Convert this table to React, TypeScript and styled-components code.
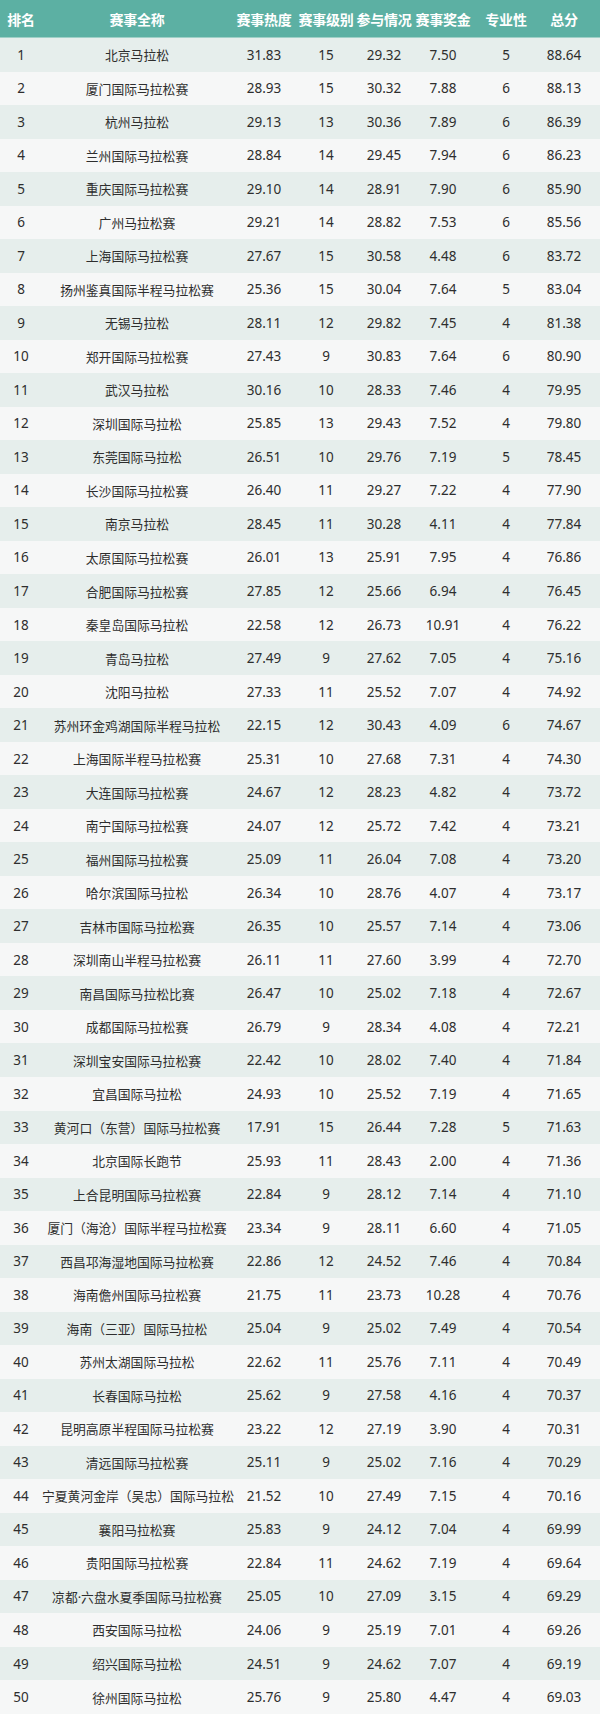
import styled, { createGlobalStyle } from "styled-components";

const GlobalStyle = createGlobalStyle`
  html, body {
    margin: 0;
    padding: 0;
    background: #ffffff;
  }
  body {
    font-family: "Noto Sans", "Noto Sans CJK SC", sans-serif;
  }
`;

type Race = [number, string, string, number, string, string, number, string];

const races: Race[] = [
  [1, "北京马拉松", "31.83", 15, "29.32", "7.50", 5, "88.64"],
  [2, "厦门国际马拉松赛", "28.93", 15, "30.32", "7.88", 6, "88.13"],
  [3, "杭州马拉松", "29.13", 13, "30.36", "7.89", 6, "86.39"],
  [4, "兰州国际马拉松赛", "28.84", 14, "29.45", "7.94", 6, "86.23"],
  [5, "重庆国际马拉松赛", "29.10", 14, "28.91", "7.90", 6, "85.90"],
  [6, "广州马拉松赛", "29.21", 14, "28.82", "7.53", 6, "85.56"],
  [7, "上海国际马拉松赛", "27.67", 15, "30.58", "4.48", 6, "83.72"],
  [8, "扬州鉴真国际半程马拉松赛", "25.36", 15, "30.04", "7.64", 5, "83.04"],
  [9, "无锡马拉松", "28.11", 12, "29.82", "7.45", 4, "81.38"],
  [10, "郑开国际马拉松赛", "27.43", 9, "30.83", "7.64", 6, "80.90"],
  [11, "武汉马拉松", "30.16", 10, "28.33", "7.46", 4, "79.95"],
  [12, "深圳国际马拉松", "25.85", 13, "29.43", "7.52", 4, "79.80"],
  [13, "东莞国际马拉松", "26.51", 10, "29.76", "7.19", 5, "78.45"],
  [14, "长沙国际马拉松赛", "26.40", 11, "29.27", "7.22", 4, "77.90"],
  [15, "南京马拉松", "28.45", 11, "30.28", "4.11", 4, "77.84"],
  [16, "太原国际马拉松赛", "26.01", 13, "25.91", "7.95", 4, "76.86"],
  [17, "合肥国际马拉松赛", "27.85", 12, "25.66", "6.94", 4, "76.45"],
  [18, "秦皇岛国际马拉松", "22.58", 12, "26.73", "10.91", 4, "76.22"],
  [19, "青岛马拉松", "27.49", 9, "27.62", "7.05", 4, "75.16"],
  [20, "沈阳马拉松", "27.33", 11, "25.52", "7.07", 4, "74.92"],
  [21, "苏州环金鸡湖国际半程马拉松", "22.15", 12, "30.43", "4.09", 6, "74.67"],
  [22, "上海国际半程马拉松赛", "25.31", 10, "27.68", "7.31", 4, "74.30"],
  [23, "大连国际马拉松赛", "24.67", 12, "28.23", "4.82", 4, "73.72"],
  [24, "南宁国际马拉松赛", "24.07", 12, "25.72", "7.42", 4, "73.21"],
  [25, "福州国际马拉松赛", "25.09", 11, "26.04", "7.08", 4, "73.20"],
  [26, "哈尔滨国际马拉松", "26.34", 10, "28.76", "4.07", 4, "73.17"],
  [27, "吉林市国际马拉松赛", "26.35", 10, "25.57", "7.14", 4, "73.06"],
  [28, "深圳南山半程马拉松赛", "26.11", 11, "27.60", "3.99", 4, "72.70"],
  [29, "南昌国际马拉松比赛", "26.47", 10, "25.02", "7.18", 4, "72.67"],
  [30, "成都国际马拉松赛", "26.79", 9, "28.34", "4.08", 4, "72.21"],
  [31, "深圳宝安国际马拉松赛", "22.42", 10, "28.02", "7.40", 4, "71.84"],
  [32, "宜昌国际马拉松", "24.93", 10, "25.52", "7.19", 4, "71.65"],
  [33, "黄河口（东营）国际马拉松赛", "17.91", 15, "26.44", "7.28", 5, "71.63"],
  [34, "北京国际长跑节", "25.93", 11, "28.43", "2.00", 4, "71.36"],
  [35, "上合昆明国际马拉松赛", "22.84", 9, "28.12", "7.14", 4, "71.10"],
  [36, "厦门（海沧）国际半程马拉松赛", "23.34", 9, "28.11", "6.60", 4, "71.05"],
  [37, "西昌邛海湿地国际马拉松赛", "22.86", 12, "24.52", "7.46", 4, "70.84"],
  [38, "海南儋州国际马拉松赛", "21.75", 11, "23.73", "10.28", 4, "70.76"],
  [39, "海南（三亚）国际马拉松", "25.04", 9, "25.02", "7.49", 4, "70.54"],
  [40, "苏州太湖国际马拉松", "22.62", 11, "25.76", "7.11", 4, "70.49"],
  [41, "长春国际马拉松", "25.62", 9, "27.58", "4.16", 4, "70.37"],
  [42, "昆明高原半程国际马拉松赛", "23.22", 12, "27.19", "3.90", 4, "70.31"],
  [43, "清远国际马拉松赛", "25.11", 9, "25.02", "7.16", 4, "70.29"],
  [44, "宁夏黄河金岸（吴忠）国际马拉松", "21.52", 10, "27.49", "7.15", 4, "70.16"],
  [45, "襄阳马拉松赛", "25.83", 9, "24.12", "7.04", 4, "69.99"],
  [46, "贵阳国际马拉松赛", "22.84", 11, "24.62", "7.19", 4, "69.64"],
  [47, "凉都·六盘水夏季国际马拉松赛", "25.05", 10, "27.09", "3.15", 4, "69.29"],
  [48, "西安国际马拉松", "24.06", 9, "25.19", "7.01", 4, "69.26"],
  [49, "绍兴国际马拉松", "24.51", 9, "24.62", "7.07", 4, "69.19"],
  [50, "徐州国际马拉松", "25.76", 9, "25.80", "4.47", 4, "69.03"],
];

const headers = ["排名", "赛事全称", "赛事热度", "赛事级别", "参与情况", "赛事奖金", "专业性", "总分"];

const COLUMNS = "42px 190px 64px 60px 56px 62px 64px 52px";

export default function App() {
  return (
    <>
      <GlobalStyle />
      <Table>
        <HeaderRow>
          {headers.map((h) => (
            <HeaderCell key={h}>{h}</HeaderCell>
          ))}
        </HeaderRow>
        {races.map((race, index) => (
          <Row key={race[0]} $odd={index % 2 === 0}>
            {race.map((value, i) => (
              <Cell key={i} $name={i === 1}>
                {value}
              </Cell>
            ))}
          </Row>
        ))}
      </Table>
    </>
  );
}

const Table = styled.div`
  width: 600px;
  display: flex;
  flex-direction: column;
`;

const HeaderRow = styled.div`
  display: grid;
  grid-template-columns: ${COLUMNS};
  height: 38px;
  align-items: center;
  background: #5cb0a3;
  border-bottom: 1px solid #9fd0c7;
  box-sizing: border-box;
`;

const HeaderCell = styled.div`
  text-align: center;
  white-space: nowrap;
  font-size: 14px;
  font-weight: 700;
  color: #ffffff;
  letter-spacing: -0.2px;
`;

const Row = styled.div<{ $odd: boolean }>`
  display: grid;
  grid-template-columns: ${COLUMNS};
  height: 33.52px;
  align-items: center;
  background: ${(p) => (p.$odd ? "#e6eeec" : "#f6f7f7")};
`;

const Cell = styled.div<{ $name: boolean }>`
  text-align: center;
  white-space: nowrap;
  font-size: ${(p) => (p.$name ? "12.8px" : "13.5px")};
  color: #2e2e2e;
`;
